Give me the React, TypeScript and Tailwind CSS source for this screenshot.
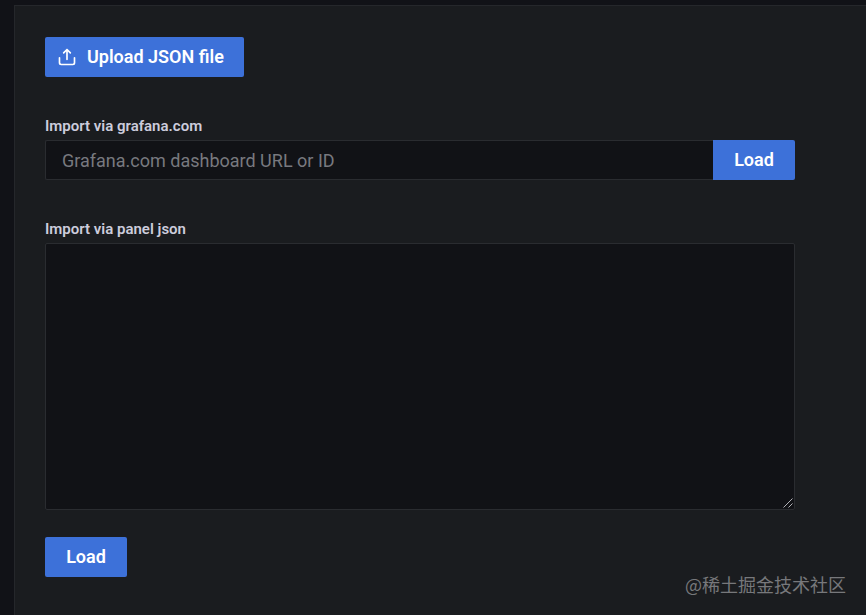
import type { ButtonHTMLAttributes } from 'react'

function Button({ className = '', ...props }: ButtonHTMLAttributes<HTMLButtonElement>) {
  return (
    <button
      type="button"
      className={`flex h-10 items-center justify-center bg-[#3d71d9] text-lg font-semibold text-white ${className}`}
      {...props}
    />
  )
}

function UploadIcon() {
  return (
    <svg width="20" height="20" viewBox="0 0 24 24" fill="currentColor" aria-hidden="true">
      <path d="M8.71,7.71,11,5.41V15a1,1,0,0,0,2,0V5.41l2.29,2.3a1,1,0,0,0,1.42,0,1,1,0,0,0,0-1.42l-4-4a1,1,0,0,0-.33-.21,1,1,0,0,0-.76,0,1,1,0,0,0-.33.21l-4,4A1,1,0,1,0,8.71,7.71ZM21,12a1,1,0,0,0-1,1v6a1,1,0,0,1-1,1H5a1,1,0,0,1-1-1V13a1,1,0,0,0-2,0v6a3,3,0,0,0,3,3H19a3,3,0,0,0,3-3V13A1,1,0,0,0,21,12Z" />
    </svg>
  )
}

export default function App() {
  return (
    <div className="min-h-screen bg-[#111217] pt-[5px] pl-[14px] font-['Roboto',sans-serif] text-[#ccccdc]">
      <main className="relative min-h-[calc(100vh-5px)] border-t border-l border-[#25272b] bg-[#1a1c1f] pt-[31px] pr-[71px] pb-[38px] pl-[30px]">
        <Button className="gap-[10px] rounded-xs pr-5 pl-3">
          <UploadIcon />
          Upload JSON file
        </Button>

        <form className="mt-10" onSubmit={(e) => e.preventDefault()}>
          <label htmlFor="gcom" className="block text-[15px] leading-[18px] font-semibold">
            Import via grafana.com
          </label>
          <div className="mt-[5px] flex">
            <input
              id="gcom"
              type="text"
              placeholder="Grafana.com dashboard URL or ID"
              className="h-10 min-w-0 flex-1 rounded-l-xs border border-r-0 border-[#2a2c30] bg-[#111216] px-4 text-lg outline-none placeholder:text-[#78797f]"
            />
            <Button className="w-[82px] rounded-r-xs">Load</Button>
          </div>
        </form>

        <form className="mt-10" onSubmit={(e) => e.preventDefault()}>
          <label htmlFor="panel-json" className="block text-[15px] leading-[18px] font-semibold">
            Import via panel json
          </label>
          <div className="relative mt-[5px]">
            <textarea
              id="panel-json"
              className="block h-[267px] w-full resize-y rounded-xs border border-[#2a2c30] bg-[#111216] px-4 py-2 text-lg outline-none [&::-webkit-resizer]:bg-transparent"
            />
            {/* Resize grip */}
            <svg
              className="pointer-events-none absolute right-[2px] bottom-[2px] text-[#c4c4c8]"
              width="10"
              height="10"
              viewBox="0 0 10 10"
              stroke="currentColor"
              strokeWidth="0.9"
              aria-hidden="true"
            >
              <path d="M0.5 9.5 9.5 0.5M5.5 9.5l4-4" />
            </svg>
          </div>
          <Button className="mt-[27px] w-[82px] rounded-xs">Load</Button>
        </form>

        <p className="absolute right-5 bottom-[17px] font-['Noto_Sans_CJK_SC',sans-serif] text-lg leading-7 text-[#77787b]">
          @稀土掘金技术社区
        </p>
      </main>
    </div>
  )
}
